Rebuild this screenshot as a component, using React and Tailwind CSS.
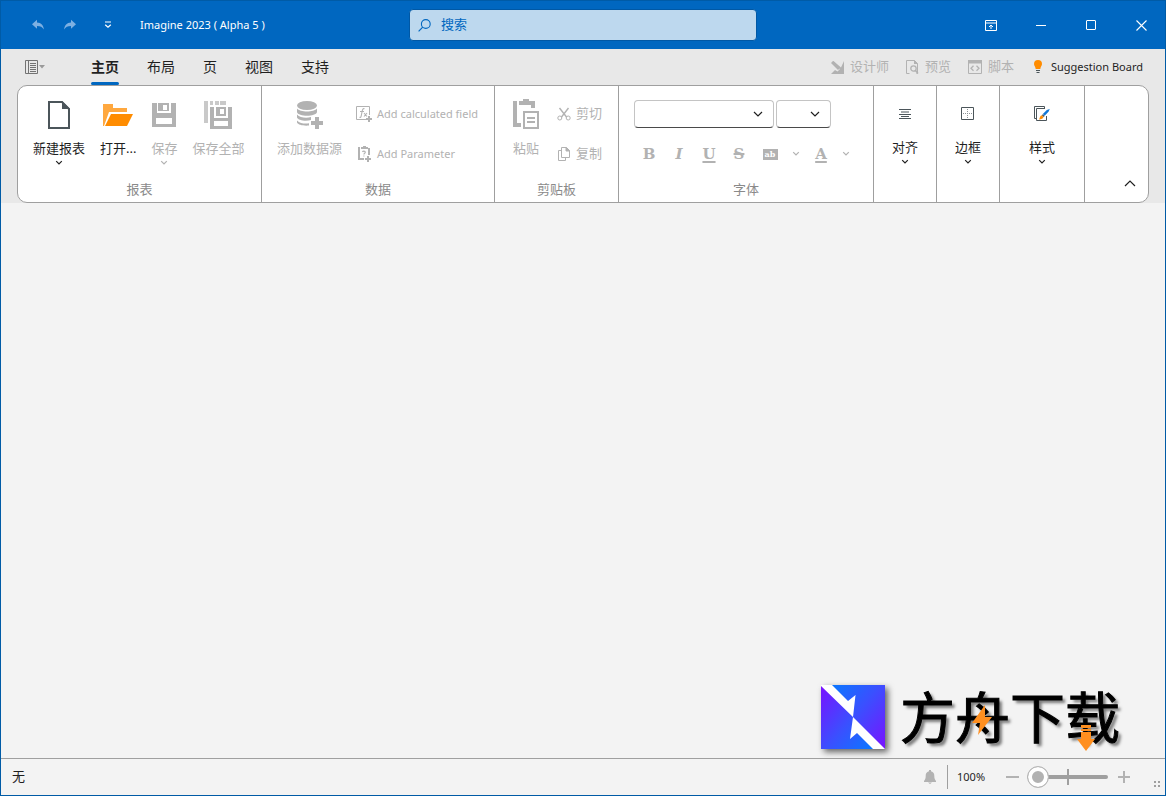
import React from "react";

const Svg = ({ w, h, className = "", children, box }) => (
  <svg width={w} height={h} viewBox={box || `0 0 ${w} ${h}`} className={`shrink-0 ${className}`} fill="none" aria-hidden="true">
    {children}
  </svg>
);

const Chevron = ({ className = "" }) => (
  <Svg w={8} h={6} className={className}>
    <path d="M1.2 1.2 4 4l2.800-2.800" stroke="currentColor" strokeWidth="1.2" />
  </Svg>
);

const WideChevron = ({ className = "" }) => (
  <Svg w={10} h={6} className={className}>
    <path d="M1 1l4 4 4-4" stroke="currentColor" strokeWidth="1.2" />
  </Svg>
);

/* ---------- icons ---------- */

const UndoIcon = ({ className = "" }) => (
  <Svg w={12} h={12} className={className}>
    <path d="M0 5.200 5 .8v2.700c4.200.2 6.500 2.800 6.900 7-1.500-2.400-3.500-3.500-6.900-3.500v2.800z" fill="currentColor" />
  </Svg>
);

const NewIcon = () => (
  <Svg w={22} h={28}>
    <path d="M1 1h13l7 7v19H1z" stroke="#4b555a" strokeWidth="2" />
    <path d="M14 0v8h8z" fill="#4b555a" />
  </Svg>
);

const OpenIcon = () => (
  <Svg w={30} h={22}>
    <path d="M0 0h10v4h14v4H6L1 22H0z" fill="#ffa83f" />
    <path d="M8 10h22l-6 12H2z" fill="#ff8c00" />
  </Svg>
);

const SaveIcon = () => (
  <Svg w={24} h={24}>
    <path fillRule="evenodd" d="M0 0h5v10h14V0h5v24H0zM4 15v6h16v-6z" fill="#b2b2b2" />
    <path fillRule="evenodd" d="M6 0h11v8H6zM11 2v5h4V2z" fill="#b2b2b2" />
  </Svg>
);

const SaveAllIcon = () => (
  <Svg w={28} h={28}>
    <path d="M0 0h4v22H0zM6 0h3v4H6zM11 0h4v4h-4zM16 0h6v4h-6z" fill="#c9c9c9" />
    <path fillRule="evenodd" d="M6 6h4v11h14V6h4v22H6zM10 20v5h14v-5z" fill="#b2b2b2" />
    <path fillRule="evenodd" d="M12 6h10v9H12zM16 8v5h4V8z" fill="#b2b2b2" />
  </Svg>
);

const DatabaseIcon = () => (
  <Svg w={28} h={28}>
    <ellipse cx="11" cy="4.500" rx="10" ry="4.500" fill="#b2b2b2" />
    <path d="M1 7.500c3 4 17 4 20 0v3.500c-1 5-19 5-20 0z" fill="#b2b2b2" />
    <path d="M1 13.500c3 3.500 10 3.800 14 2.500v3c-5 1.500-13 .5-14-2.500zM1 19.500c3 3 8 3.500 12 2.800v2.200c-5 .6-11-.5-12-3z" fill="#b2b2b2" />
    <path d="M19 16h4v4h4v4h-4v4h-4v-4h-4v-4h4z" fill="#b2b2b2" />
  </Svg>
);

const PasteIcon = () => (
  <Svg w={28} h={32}>
    <path d="M1 2h4v22h4v4H1zM19 2h4v7h-4zM7 2h4V0h6v2h3v4H7z" fill="#b2b2b2" />
    <path d="M12 13h14v16H12z" stroke="#b2b2b2" strokeWidth="2" />
    <path d="M15 19h8M15 23h8" stroke="#b2b2b2" strokeWidth="2" />
  </Svg>
);

const FieldIcon = () => (
  <Svg w={16} h={16}>
    <path d="M10 13.500H.5V.5h13V9" stroke="#b2b2b2" />
    <path d="M8.500 2.800C7 2.200 6.500 3.300 6.200 5L5.200 10c-.2 1.200-.8 1.600-1.700 1.300M4 5.500h4M8 7l3 3.500M11 7l-3 3.500" stroke="#b2b2b2" strokeWidth="1.100" />
    <path d="M12 10h2v2h2v2h-2v2h-2v-2h-2v-2h2z" fill="#b2b2b2" />
  </Svg>
);

const ParameterIcon = () => (
  <Svg w={16} h={16}>
    <path d="M2 1h2v11h4v2H2zM5 1h2V0h3v1h2v2H5zM12 2h2v7h-2z" fill="#b2b2b2" />
    <path d="M6.500 6c.3-1.200 2.800-1.200 2.800.3 0 1-1.400 1-1.400 2.200M7.900 9.500v1" stroke="#b2b2b2" strokeWidth="1.100" />
    <path d="M11 10h2v2h2v2h-2v2h-2v-2H9v-2h2z" fill="#b2b2b2" />
  </Svg>
);

const CutIcon = () => (
  <Svg w={14} h={14}>
    <path d="M2.500 1 9.500 10M11.500 1 4.500 10" stroke="#b2b2b2" strokeWidth="1.400" />
    <circle cx="2.800" cy="11" r="2" stroke="#b2b2b2" />
    <circle cx="11.200" cy="11" r="2" stroke="#b2b2b2" />
  </Svg>
);

const CopyIcon = () => (
  <Svg w={14} h={14}>
    <path d="M4 3.500H1.500v10h7V11M4.500.5h5l3 3v7h-8zM9 .5v3.500h3.500" stroke="#b2b2b2" />
    <path d="M9 0v4h4z" fill="#b2b2b2" />
  </Svg>
);

const AlignIcon = () => (
  <Svg w={12} h={10}>
    <path d="M0 .5h12M2 3h8M0 5.500h12M2 7.500h8M0 9.500h12" stroke="#4b555a" />
  </Svg>
);

const BorderIcon = () => (
  <Svg w={14} h={14}>
    <path d="M.5.5h12v12H.5z" stroke="#4b555a" />
    <path d="M6.500 2v10M2 6.500h10" stroke="#8c9296" strokeDasharray="1 1" />
  </Svg>
);

const StyleIcon = () => (
  <Svg w={16} h={16}>
    <path d="M2.500 12.500h-2V.5h10v2M11 2.500H2.500v12h10V10" stroke="#4b555a" />
    <path d="m15.800 3-1.300 2.800-3.800 4-1.900-1.800 4-4z" fill="#1177d7" />
    <path d="m8.800 8.200 1.900 1.800-1 1-1.900-1.800z" fill="#4b555a" />
    <path d="M7.500 9.200 9.500 11c-.3 1.500-2 2.300-4.500 2.500.8-1 .8-3.500 2.500-4.300z" fill="#ff8c00" />
  </Svg>
);

/* ---------- ribbon building blocks ---------- */

const Group = ({ label, className = "", children }) => (
  <section className={`flex flex-col justify-between border-r border-[#9f9f9f] pb-[5px] ${className}`}>
    {children}
    {label && <div className="text-center leading-4 text-[#8a8a8a]">{label}</div>}
  </section>
);

const BigButton = ({ icon, label, muted, menu }) => (
  <button type="button" disabled={muted} className={`flex flex-col items-center ${muted ? "text-[#b2b2b2]" : "text-[#1f1f1f]"}`}>
    <span className="flex h-8 items-center">{icon}</span>
    <span className="mt-[9px] whitespace-nowrap leading-4">{label}</span>
    {menu && <Chevron className="mt-1" />}
  </button>
);

const RowButton = ({ icon, label }) => (
  <button type="button" disabled className="flex h-6 items-center gap-[5px] whitespace-nowrap text-[#b2b2b2]">
    {icon}
    {label}
  </button>
);

const Combo = ({ label, className }) => (
  <div className={`relative ${className}`}>
    <select
      aria-label={label}
      className="h-7 w-full appearance-none rounded border border-[#c4c4c4] border-b-[#4a4a4a] bg-white px-2"
    >
      <option></option>
    </select>
    <WideChevron className="pointer-events-none absolute right-[11px] top-[11px] text-[#1f1f1f]" />
  </div>
);

const Letter = ({ label, className = "", children }) => (
  <button
    type="button"
    disabled
    aria-label={label}
    className={`h-6 w-[30px] font-['DejaVu_Serif',serif] text-[15px] font-bold leading-6 text-[#b2b2b2] ${className}`}
  >
    {children}
  </button>
);

const tabs = ["主页", "布局", "页", "视图", "支持"];

function TitleBar() {
  return (
    <header className="flex h-12 items-center bg-[#0067c0] text-white">
      <div className="flex flex-1 items-center pl-[21px]">
        <button type="button" aria-label="Undo" className="flex h-8 w-8 items-center justify-center text-[#7db0e2]">
          <UndoIcon />
        </button>
        <button type="button" aria-label="Redo" className="flex h-8 w-8 items-center justify-center text-[#7db0e2]">
          <UndoIcon className="-scale-x-100" />
        </button>
        <button type="button" aria-label="Customize" className="ml-1.5 flex h-8 w-8 items-center justify-center">
          <Svg w={8} h={8}>
            <path d="M1 1h6M1.200 3.700 4 6.300l2.800-2.600" stroke="#fff" strokeWidth="1.200" />
          </Svg>
        </button>
        <h1 className="ml-4 whitespace-nowrap text-[11px]">Imagine 2023 ( Alpha 5 )</h1>
      </div>
      <label className="flex h-8 w-[348px] items-center gap-2.5 rounded border border-[#0058a5] bg-[#bdd8ee] px-2">
        <Svg w={13} h={13}>
          <circle cx="7.800" cy="5" r="4.400" stroke="#0067c0" strokeWidth="1.100" />
          <path d="M4.700 8.200.6 12.300" stroke="#0067c0" strokeWidth="1.200" />
        </Svg>
        <input
          type="search"
          aria-label="搜索"
          placeholder="搜索"
          className="min-w-0 flex-1 bg-transparent text-[13px] outline-none placeholder:text-[#0067c0]"
        />
      </label>
      <div className="flex flex-1 justify-end gap-0.5 pl-[21px]">
        <button type="button" aria-label="Ribbon display options" className="flex h-12 w-12 items-center justify-center">
          <Svg w={12} h={11}>
            <path d="M.5.5h11v10H.5zM0 3h12M6 9V5.200M4 7l2-2 2 2" stroke="#fff" />
          </Svg>
        </button>
        <button type="button" aria-label="Minimize" className="flex h-12 w-12 items-center justify-center">
          <Svg w={10} h={1}>
            <path d="M0 .5h10" stroke="#fff" />
          </Svg>
        </button>
        <button type="button" aria-label="Maximize" className="flex h-12 w-12 items-center justify-center">
          <Svg w={10} h={10}>
            <rect x=".5" y=".5" width="9" height="9" rx=".5" stroke="#fff" />
          </Svg>
        </button>
        <button type="button" aria-label="Close" className="flex h-12 w-12 items-center justify-center">
          <Svg w={11} h={11}>
            <path d="m.5.5 10 10M10.500.5l-10 10" stroke="#fff" strokeWidth="1.100" />
          </Svg>
        </button>
      </div>
    </header>
  );
}

function TabRow() {
  return (
    <nav className="flex h-9 items-stretch justify-between pl-6 pr-[22px]">
      <div className="flex">
        <button type="button" aria-label="File" className="mr-8 flex items-center gap-px">
          <Svg w={13} h={14}>
            <path d="M.5.5h12v13H.5zM3.500 0v14" stroke="#737373" />
            <path d="M5 3.500h6M5 5.500h6M5 7.500h6M5 9.500h6M5 11.500h6" stroke="#737373" />
          </Svg>
          <Svg w={6} h={4}>
            <path d="M0 0h6L3 3.500z" fill="#9a9a9a" />
          </Svg>
        </button>
        {tabs.map((t, i) => (
          <button
            key={t}
            type="button"
            className={`flex flex-col justify-between px-3.5 pt-2 text-[14px] leading-5 ${i === 0 ? "font-bold" : ""}`}
          >
            {t}
            {i === 0 && <span className="h-[3px] w-full rounded-full bg-[#0067c0]" />}
          </button>
        ))}
      </div>
      <div className="flex items-center gap-[17px] text-[#b2b2b2]">
        <button type="button" disabled className="flex items-center gap-1.5">
          <Svg w={13} h={13}>
            <path d="M13 0v13H0l4-4 2.500 1.500L9 8 1 1.500 2.500 0 10 6.500z" fill="#b2b2b2" />
            <path d="m0 2 2-2 7 7-2 2z" fill="#b2b2b2" />
          </Svg>
          设计师
        </button>
        <button type="button" disabled className="flex items-center gap-1.5">
          <Svg w={13} h={14}>
            <path d="M3.500 13.500H.5V.5h8l3 3v10h-1" stroke="#b2b2b2" />
            <path d="M8 0v4h4z" fill="#b2b2b2" />
            <circle cx="7.500" cy="8.500" r="2.700" stroke="#b2b2b2" strokeWidth="1.300" />
            <path d="m9.500 10.500 2.500 3" stroke="#b2b2b2" strokeWidth="1.500" />
          </Svg>
          预览
        </button>
        <button type="button" disabled className="flex items-center gap-1.5">
          <Svg w={14} h={14}>
            <path d="M.5.5h13v13H.5z" stroke="#b2b2b2" />
            <path d="M0 0h14v3.500H0z" fill="#b2b2b2" />
            <path d="M5.500 5.800 3 8.300l2.500 2.500M8.500 5.800 11 8.300l-2.500 2.500" stroke="#b2b2b2" strokeWidth="1.300" />
          </Svg>
          脚本
        </button>
        <button type="button" className="ml-0.5 flex items-center gap-2 whitespace-nowrap text-[11px] text-[#1f1f1f]">
          <Svg w={10} h={14}>
            <path d="M5 0a4 4 0 0 1 4 4c0 2-1.500 2.500-1.700 5H2.700C2.500 6.500 1 6 1 4a4 4 0 0 1 4-4z" fill="#ff8c00" />
            <path d="M3 10.500h4M3.500 12.500h3" stroke="#4b555a" />
          </Svg>
          Suggestion Board
        </button>
      </div>
    </nav>
  );
}

function Ribbon() {
  return (
    <div className="mx-4 flex h-[118px] rounded-[10px] border border-[#9f9f9f] bg-white text-[13px]">
      <Group label="报表" className="w-[244px]">
        <div className="flex items-start gap-[15px] pl-[15px] pt-[13px]">
          <BigButton icon={<NewIcon />} label="新建报表" menu />
          <BigButton icon={<OpenIcon />} label="打开..." />
          <BigButton icon={<SaveIcon />} label="保存" muted menu />
          <BigButton icon={<SaveAllIcon />} label="保存全部" muted />
        </div>
      </Group>
      <Group label="数据" className="w-[233px]">
        <div className="flex items-start gap-[14px] pl-[15px] pt-[13px]">
          <BigButton icon={<DatabaseIcon />} label="添加数据源" muted />
          <div className="flex flex-col gap-4 pt-[3px] text-[11px]">
            <RowButton icon={<FieldIcon />} label="Add calculated field" />
            <RowButton icon={<ParameterIcon />} label="Add Parameter" />
          </div>
        </div>
      </Group>
      <Group label="剪贴板" className="w-[124px]">
        <div className="flex items-start gap-[17px] pl-[17px] pt-[13px]">
          <BigButton icon={<PasteIcon />} label="粘贴" muted />
          <div className="flex flex-col gap-4 pt-[3px]">
            <RowButton icon={<CutIcon />} label="剪切" />
            <RowButton icon={<CopyIcon />} label="复制" />
          </div>
        </div>
      </Group>
      <Group label="字体" className="w-[255px]">
        <div className="flex flex-col gap-[14px] pl-[15px] pt-[14px]">
          <div className="flex gap-0.5">
            <Combo label="Font family" className="w-[140px]" />
            <Combo label="Font size" className="w-[55px]" />
          </div>
          <div className="flex items-center">
            <Letter label="Bold">B</Letter>
            <Letter label="Italic" className="italic">I</Letter>
            <Letter label="Underline" className="underline decoration-2 underline-offset-2">U</Letter>
            <Letter label="Strikethrough" className="line-through decoration-2">S</Letter>
            <button type="button" disabled aria-label="Highlight" className="flex w-8 justify-center">
              <span className="h-[11px] w-[15px] bg-[#b2b2b2] text-center font-['DejaVu_Serif',serif] text-[8px] font-bold leading-[10px] text-white">
                ab
              </span>
            </button>
            <button type="button" disabled aria-label="Highlight color" className="flex h-6 w-5 items-center justify-center text-[#b2b2b2]">
              <Chevron />
            </button>
            <Letter label="Text color" className="underline decoration-2 underline-offset-2">A</Letter>
            <button type="button" disabled aria-label="Text color options" className="flex h-6 w-5 items-center justify-center text-[#b2b2b2]">
              <Chevron />
            </button>
          </div>
        </div>
      </Group>
      <Group className="w-[63px] pt-3">
        <BigButton icon={<AlignIcon />} label="对齐" menu />
      </Group>
      <Group className="w-[63px] pt-3">
        <BigButton icon={<BorderIcon />} label="边框" menu />
      </Group>
      <Group className="w-[85px] pt-3">
        <BigButton icon={<StyleIcon />} label="样式" menu />
      </Group>
      <div className="flex flex-1 items-end justify-end pb-[9px] pr-2">
        <button type="button" aria-label="Collapse ribbon" className="flex h-5 w-5 items-center justify-center text-[#1f1f1f]">
          <Svg w={12} h={7}>
            <path d="m1 6 5-5 5 5" stroke="currentColor" strokeWidth="1.200" />
          </Svg>
        </button>
      </div>
    </div>
  );
}

function Brand() {
  return (
    <div className="flex items-center gap-[15px]">
      <svg width="64" height="64" viewBox="0 0 64 64" className="shrink-0 drop-shadow-[3px_3px_3px_rgba(0,0,0,0.6)]" aria-hidden="true">
        <defs>
          <linearGradient id="upper" x1="0" y1="0" x2="1" y2="1">
            <stop offset="0" stopColor="#0a78ff" />
            <stop offset="0.450" stopColor="#3a50ff" />
            <stop offset="1" stopColor="#7a12ff" />
          </linearGradient>
          <linearGradient id="lower" x1="0" y1="0" x2="1" y2="1">
            <stop offset="0" stopColor="#7a12ff" />
            <stop offset="0.550" stopColor="#3a50ff" />
            <stop offset="1" stopColor="#0a78ff" />
          </linearGradient>
        </defs>
        <rect width="64" height="64" fill="#fff" />
        <path d="M11 0h53v64L32 32l2.500-22L27 16z" fill="url(#upper)" />
        <path d="M0 1l32 31-3 22 7-6 16 16H0z" fill="url(#lower)" />
      </svg>
      <div className="relative whitespace-nowrap text-[55px] font-normal leading-[64px] text-black [-webkit-text-stroke:1px_black] [text-shadow:3px_3px_3px_rgba(0,0,0,0.5)]">
        方舟下载
        <svg width="20" height="30" viewBox="0 0 20 30" className="absolute left-[72px] top-5" aria-hidden="true">
          <path d="M13 0v12h7L6 30l2-12H0z" fill="#ff8f1f" />
        </svg>
        <svg width="18" height="26" viewBox="0 0 18 26" className="absolute left-[177px] top-10" aria-hidden="true">
          <path d="M4 0h10v3H4zM4 4h10v2H4zM4 7h10v7h4L9 26 0 14h4z" fill="#ff8f1f" />
        </svg>
      </div>
    </div>
  );
}

function StatusBar() {
  return (
    <footer className="flex h-[37px] items-center justify-between border-t border-[#9f9f9f] pl-[11px] pr-1">
      <span className="text-[13px]">无</span>
      <div className="flex items-center">
        <button type="button" aria-label="Notifications">
          <Svg w={12} h={14}>
            <path d="M5 0h2v1.300C9.500 2 10.300 3.500 10.300 6c0 2.500.7 3.500 1.700 5v1H0v-1c1-1.500 1.700-2.500 1.700-5 0-2.500.8-4 3.300-4.700zM4 12.500h4L6 14z" fill="#b2b2b2" />
          </Svg>
        </button>
        <span className="ml-[11px] mr-[9px] h-6 w-px bg-[#9f9f9f]" />
        <span className="w-[49px] text-[11px]">100%</span>
        <button type="button" aria-label="Zoom out">
          <Svg w={13} h={12}>
            <path d="M0 6h13" stroke="#b2b2b2" strokeWidth="2" />
          </Svg>
        </button>
        <div className="relative ml-2 mr-2.5 flex items-center">
          <span className="pointer-events-none absolute left-10 h-4 w-0.5 bg-[#9f9f9f]" />
          <input
            type="range"
            aria-label="Zoom"
            min="0"
            max="100"
            defaultValue="0"
            className="h-[22px] w-[81px] appearance-none bg-transparent [&::-webkit-slider-runnable-track]:h-1 [&::-webkit-slider-runnable-track]:rounded-full [&::-webkit-slider-runnable-track]:bg-[#9f9f9f] [&::-webkit-slider-thumb]:-mt-[9px] [&::-webkit-slider-thumb]:h-[22px] [&::-webkit-slider-thumb]:w-[22px] [&::-webkit-slider-thumb]:appearance-none [&::-webkit-slider-thumb]:rounded-full [&::-webkit-slider-thumb]:border [&::-webkit-slider-thumb]:border-[#b8b8b8] [&::-webkit-slider-thumb]:bg-[#b2b2b2] [&::-webkit-slider-thumb]:shadow-[inset_0_0_0_4px_#fff]"
          />
        </div>
        <button type="button" aria-label="Zoom in">
          <Svg w={12} h={12}>
            <path d="M0 6h12M6 0v12" stroke="#b2b2b2" strokeWidth="2" />
          </Svg>
        </button>
        <Svg w={7} h={7} className="ml-6 mt-3.5">
          <path d="M0 0h2v2H0zM4 0h2v2H4zM0 4h2v2H0zM4 4h2v2H4z" fill="#9f9f9f" />
        </Svg>
      </div>
    </footer>
  );
}

export default function App() {
  return (
    <div className="flex min-h-screen flex-col border border-[#005ba6] bg-[#f3f3f3] font-['Noto_Sans','Noto_Sans_CJK_SC',sans-serif] text-[13px] text-[#1f1f1f]">
      <TitleBar />
      <div className="bg-[#e8e8e8]">
        <TabRow />
        <Ribbon />
      </div>
      <main className="flex flex-1 items-end justify-end pb-[9px] pr-[45px]">
        <Brand />
      </main>
      <StatusBar />
    </div>
  );
}
